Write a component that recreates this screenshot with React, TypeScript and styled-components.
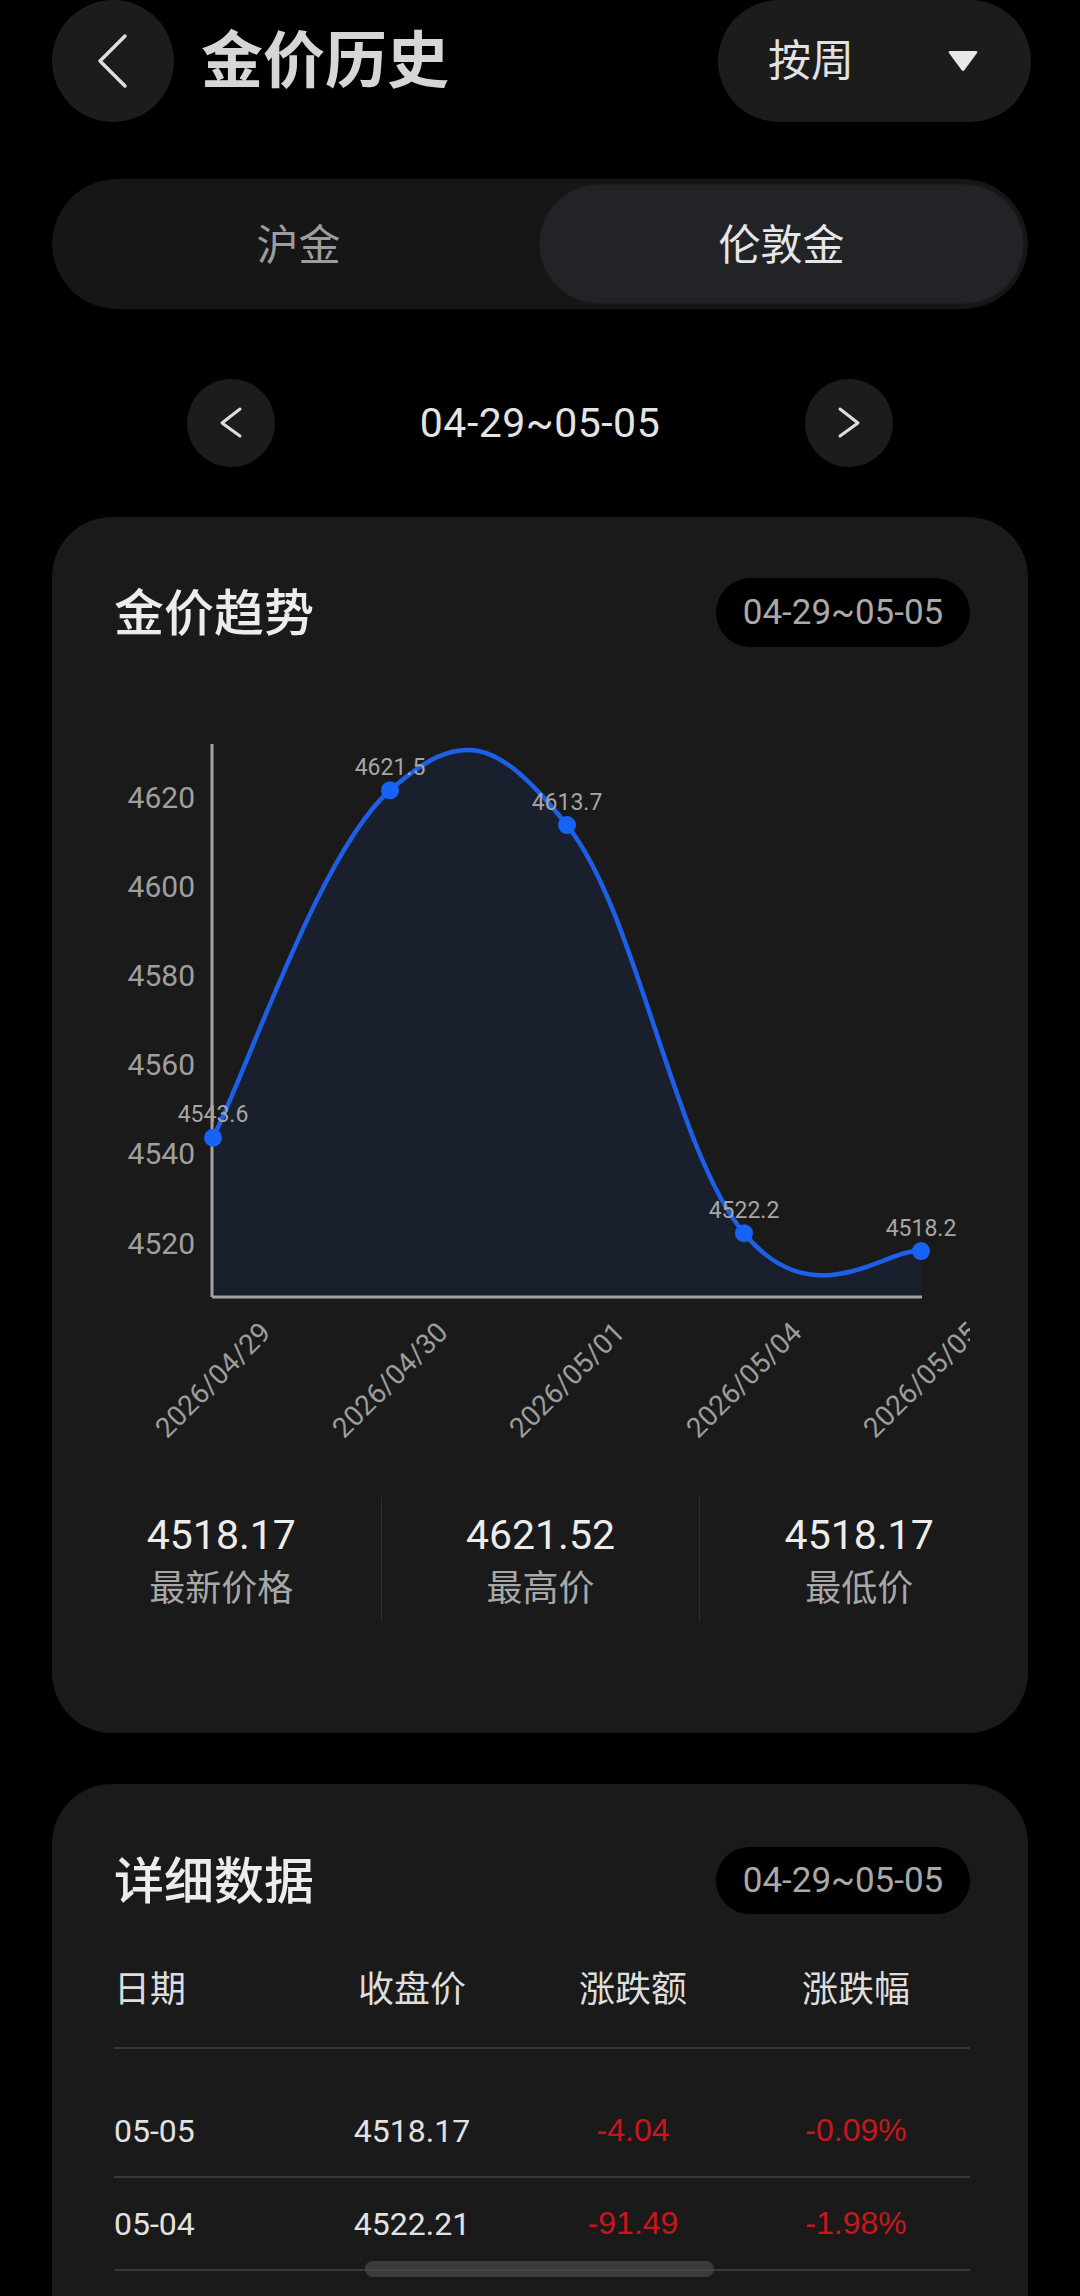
import React from "react";
import styled, { createGlobalStyle } from "styled-components";

const GlobalStyle = createGlobalStyle`
  html, body { margin: 0; padding: 0; background: #000; }
  body { font-family: Roboto, "Noto Sans CJK SC", sans-serif; -webkit-font-smoothing: antialiased; }
  #root { width: 1080px; height: 2296px; overflow: hidden; position: relative; }
`;

const CJK = `"Noto Sans CJK SC", "Noto Sans", sans-serif`;
const NUM = `Roboto, "Noto Sans", sans-serif`;

const Page = styled.div`
  box-sizing: border-box;
  width: 1080px;
  height: 2296px;
  padding: 0 52px;
  display: flex;
  flex-direction: column;
  background: #000;
`;

const Header = styled.header`
  height: 122px;
  display: flex;
  align-items: center;
  justify-content: space-between;
  flex-shrink: 0;
`;

const HeaderLeft = styled.div`
  display: flex;
  align-items: center;
  gap: 27px;
`;

const RoundButton = styled.button<{ $size: number }>`
  width: ${(p) => p.$size}px;
  height: ${(p) => p.$size}px;
  border-radius: 50%;
  border: none;
  padding: 0;
  background: #1c1c1c;
  display: block;
  flex-shrink: 0;
  svg { display: block; }
`;

const Title = styled.h1`
  margin: -10px 0 0;
  font-family: ${CJK};
  font-size: 62px;
  font-weight: 700;
  line-height: 1;
  color: #d6d6d6;
`;

const Dropdown = styled.div`
  box-sizing: border-box;
  width: 313px;
  height: 122px;
  margin-right: -3px;
  border-radius: 61px;
  background: #1c1c1c;
  display: flex;
  align-items: center;
  justify-content: space-between;
  padding: 0 53px 0 50px;
`;

const DropdownText = styled.span`
  font-family: ${CJK};
  font-size: 43px;
  line-height: 1;
  color: #e2e2e2;
  margin-top: -7px;
`;

const Segmented = styled.div`
  box-sizing: border-box;
  margin-top: 57px;
  height: 130px;
  border-radius: 65px;
  background: #161616;
  padding: 6px 5px;
  display: flex;
  flex-shrink: 0;
`;

const Segment = styled.div<{ $active?: boolean }>`
  flex: 1;
  border-radius: 59px;
  display: flex;
  align-items: center;
  justify-content: center;
  padding-bottom: 5px;
  font-family: ${CJK};
  font-size: 42px;
  color: ${(p) => (p.$active ? "#e6e6e6" : "#9d9d9d")};
  background: ${(p) => (p.$active ? "#212326" : "transparent")};
  box-shadow: ${(p) => (p.$active ? "0 0 0 1px #1b1d20" : "none")};
`;

const DateNav = styled.div`
  margin: 70px auto 0;
  width: 706px;
  height: 88px;
  display: grid;
  grid-template-columns: 88px 1fr 88px;
  align-items: center;
  flex-shrink: 0;
`;

const DateText = styled.div`
  text-align: center;
  font-family: ${NUM};
  font-size: 41px;
  color: #e4e4e4;
  letter-spacing: 0.5px;
`;

const Card = styled.section<{ $fill?: boolean; $top: number }>`
  box-sizing: border-box;
  margin-top: ${(p) => p.$top}px;
  background: #1a1a1a;
  border-radius: ${(p) => (p.$fill ? "60px 60px 0 0" : "60px")};
  padding: ${(p) => (p.$fill ? "63px 58px 0 62px" : "61px 58px 111px 62px")};
  flex-shrink: 0;
  ${(p) => (p.$fill ? "flex: 1;" : "")}
`;

const CardHeader = styled.div<{ $h: number }>`
  height: ${(p) => p.$h}px;
  display: flex;
  align-items: center;
  justify-content: space-between;
`;

const CardTitle = styled.h2`
  margin: -8px 0 0;
  font-family: ${CJK};
  font-size: 50px;
  font-weight: 500;
  line-height: 1;
  color: #ececec;
`;

const Badge = styled.div<{ $h: number }>`
  box-sizing: border-box;
  width: 254px;
  height: ${(p) => p.$h}px;
  border-radius: 35px;
  background: #000;
  display: flex;
  align-items: center;
  justify-content: center;
  font-family: ${NUM};
  font-size: 35px;
  color: #a9a9a9;
`;

const ChartBox = styled.div`
  margin-top: 43px;
  height: 770px;
  svg { display: block; overflow: hidden; }
`;

const Stats = styled.div`
  margin: 37px -48px 0 -52px;
  height: 125px;
  display: grid;
  grid-template-columns: repeat(3, 1fr);
`;

const Stat = styled.div<{ $divider?: boolean }>`
  display: flex;
  flex-direction: column;
  align-items: center;
  justify-content: center;
  border-left: ${(p) => (p.$divider ? "1.5px solid #2f2f2f" : "none")};
`;

const StatValue = styled.div`
  font-family: ${NUM};
  font-size: 41px;
  line-height: 48px;
  color: #ececec;
`;

const StatLabel = styled.div`
  font-family: ${CJK};
  font-size: 36px;
  line-height: 48px;
  margin-top: 2px;
  color: #a8a8a8;
`;

const GRID = "186px 224px 218px 228px";

const TableHead = styled.div`
  display: grid;
  grid-template-columns: ${GRID};
  padding: 50px 0 39px;
  border-bottom: 2px solid #393939;
`;

const HeadCell = styled.div<{ $left?: boolean }>`
  font-family: ${CJK};
  font-size: 36px;
  line-height: 44px;
  color: #dedede;
  text-align: ${(p) => (p.$left ? "left" : "center")};
`;

const TableBody = styled.div`
  padding-top: 36px;
`;

const Row = styled.div`
  display: grid;
  grid-template-columns: ${GRID};
  height: 91px;
  align-items: center;
  border-bottom: 2px solid #393939;
`;

const Cell = styled.div<{ $left?: boolean; $red?: boolean }>`
  font-family: ${(p) => (p.$red ? `"Liberation Sans", Arial, sans-serif` : NUM)};
  font-size: 32px;
  color: ${(p) => (p.$red ? "#c8161d" : "#e2e2e2")};
  text-align: ${(p) => (p.$left ? "left" : "center")};
`;

const HomeBar = styled.div`
  position: absolute;
  left: 365px;
  top: 2261px;
  width: 349px;
  height: 16px;
  border-radius: 8px;
  background: rgba(82, 82, 82, 0.6);
`;

const data = [
  { d: "2026/04/29", v: 4543.6 },
  { d: "2026/04/30", v: 4621.5 },
  { d: "2026/05/01", v: 4613.7 },
  { d: "2026/05/04", v: 4522.2 },
  { d: "2026/05/05", v: 4518.2 },
];

const yOf = (v: number) => 553 - (v - 4520) * 4.46;
const pts = data.map((p, i) => ({ x: 99 + 177 * i, y: yOf(p.v) }));

function smoothPath(p: { x: number; y: number }[], k = 0.2) {
  let d = `M${p[0].x},${p[0].y}`;
  for (let i = 0; i < p.length - 1; i++) {
    const p0 = p[i - 1] ?? p[i];
    const p1 = p[i];
    const p2 = p[i + 1];
    const p3 = p[i + 2] ?? p[i + 1];
    const c1x = p1.x + k * (p2.x - p0.x);
    const c1y = p1.y + k * (p2.y - p0.y);
    const c2x = p2.x - k * (p3.x - p1.x);
    const c2y = p2.y - k * (p3.y - p1.y);
    d += ` C${c1x.toFixed(1)},${c1y.toFixed(1)} ${c2x.toFixed(1)},${c2y.toFixed(1)} ${p2.x},${p2.y.toFixed(1)}`;
  }
  return d;
}

const AXIS_X = 98;
const AXIS_Y = 607;

function Chart() {
  const line = smoothPath(pts);
  const area = `${line} L${pts[pts.length - 1].x},${AXIS_Y} L${pts[0].x},${AXIS_Y} Z`;
  const ticks = [4520, 4540, 4560, 4580, 4600, 4620];
  return (
    <svg width="856" height="770" viewBox="0 0 856 770">
      <path d={area} fill="#1a1f2d" />
      {ticks.map((t) => (
        <text
          key={t}
          x={81}
          y={yOf(t)}
          textAnchor="end"
          dominantBaseline="central"
          fontFamily="Roboto, sans-serif"
          fontSize="30"
          fill="#9f9f9f"
        >
          {t}
        </text>
      ))}
      <line x1={AXIS_X} y1={54} x2={AXIS_X} y2={AXIS_Y} stroke="#a3a3a3" strokeWidth="3" />
      <line x1={AXIS_X} y1={AXIS_Y} x2={808} y2={AXIS_Y} stroke="#a3a3a3" strokeWidth="3" />
      <path d={line} fill="none" stroke="#1d5fe6" strokeWidth="4.5" strokeLinecap="round" />
      {pts.map((p, i) => (
        <g key={i}>
          <circle cx={p.x} cy={p.y} r="9" fill="#1763f5" />
          <text
            x={p.x}
            y={p.y - 23}
            textAnchor="middle"
            dominantBaseline="central"
            fontFamily="Roboto, sans-serif"
            fontSize="23"
            fill="#a6a6a6"
          >
            {data[i].v.toFixed(1)}
          </text>
          <text
            x={p.x}
            y={690}
            textAnchor="middle"
            dominantBaseline="central"
            fontFamily="Roboto, sans-serif"
            fontSize="28"
            fill="#9d9d9d"
            transform={`rotate(-45 ${p.x} 690)`}
          >
            {data[i].d}
          </text>
        </g>
      ))}
    </svg>
  );
}

const Chevron = ({ size, pts, w }: { size: number; pts: string; w: number }) => (
  <svg width={size} height={size} viewBox={`0 0 ${size} ${size}`}>
    <polyline points={pts} fill="none" stroke="#dedede" strokeWidth={w} strokeLinecap="round" strokeLinejoin="round" />
  </svg>
);

const rows = [
  { d: "05-05", c: "4518.17", a: "-4.04", p: "-0.09%" },
  { d: "05-04", c: "4522.21", a: "-91.49", p: "-1.98%" },
];

export default function App() {
  const range = "04-29~05-05";
  return (
    <>
      <GlobalStyle />
      <Page>
        <Header>
          <HeaderLeft>
            <RoundButton $size={122} aria-label="返回">
              <Chevron size={122} pts="73,36 48,61 73,86" w={3.5} />
            </RoundButton>
            <Title>金价历史</Title>
          </HeaderLeft>
          <Dropdown>
            <DropdownText>按周</DropdownText>
            <svg width="30" height="22" viewBox="0 0 30 22">
              <path d="M2 1 H28 Q30 1 29 3 L16.5 20 Q15 22 13.5 20 L1 3 Q0 1 2 1 Z" fill="#e8e8e8" />
            </svg>
          </Dropdown>
        </Header>

        <Segmented>
          <Segment>沪金</Segment>
          <Segment $active>伦敦金</Segment>
        </Segmented>

        <DateNav>
          <RoundButton $size={88} aria-label="上一周">
            <Chevron size={88} pts="53,30 35,44 53,57" w={3} />
          </RoundButton>
          <DateText>{range}</DateText>
          <RoundButton $size={88} aria-label="下一周">
            <Chevron size={88} pts="35,30 53,44 35,57" w={3} />
          </RoundButton>
        </DateNav>

        <Card $top={50}>
          <CardHeader $h={69}>
            <CardTitle>金价趋势</CardTitle>
            <Badge $h={69}>{range}</Badge>
          </CardHeader>
          <ChartBox>
            <Chart />
          </ChartBox>
          <Stats>
            <Stat>
              <StatValue>4518.17</StatValue>
              <StatLabel>最新价格</StatLabel>
            </Stat>
            <Stat $divider>
              <StatValue>4621.52</StatValue>
              <StatLabel>最高价</StatLabel>
            </Stat>
            <Stat $divider>
              <StatValue>4518.17</StatValue>
              <StatLabel>最低价</StatLabel>
            </Stat>
          </Stats>
        </Card>

        <Card $top={51} $fill>
          <CardHeader $h={67}>
            <CardTitle>详细数据</CardTitle>
            <Badge $h={67}>{range}</Badge>
          </CardHeader>
          <TableHead>
            <HeadCell $left>日期</HeadCell>
            <HeadCell>收盘价</HeadCell>
            <HeadCell>涨跌额</HeadCell>
            <HeadCell>涨跌幅</HeadCell>
          </TableHead>
          <TableBody>
            {rows.map((r) => (
              <Row key={r.d}>
                <Cell $left>{r.d}</Cell>
                <Cell>{r.c}</Cell>
                <Cell $red>{r.a}</Cell>
                <Cell $red>{r.p}</Cell>
              </Row>
            ))}
          </TableBody>
        </Card>
      </Page>
      <HomeBar />
    </>
  );
}
